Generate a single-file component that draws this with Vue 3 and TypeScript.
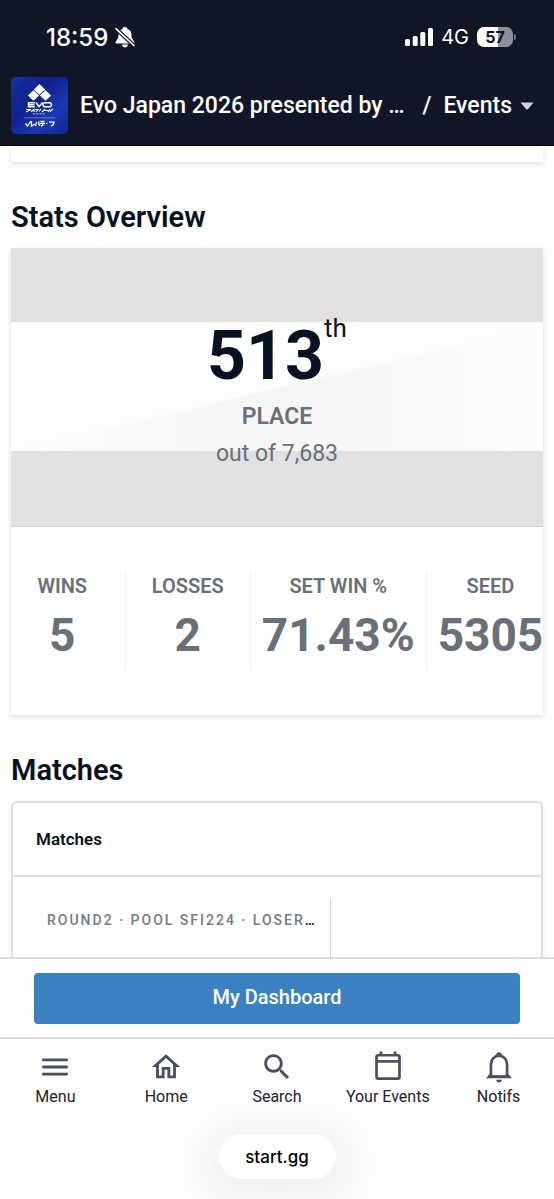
<script setup lang="ts">
interface Stat {
  label: string
  value: string
}

const stats: Stat[] = [
  { label: 'WINS', value: '5' },
  { label: 'LOSSES', value: '2' },
  { label: 'SET WIN %', value: '71.43%' },
  { label: 'SEED', value: '5305' },
]
</script>

<template>
  <div class="screen">
    <header class="top">
      <div class="status">
        <span class="clock">18:59</span>
        <svg class="muted" viewBox="0 0 20 21" aria-hidden="true">
          <path d="M10 0c1.500 0 2.400.9 2.600 2 2.700 1 3.900 3.200 3.900 6 0 3.300 1.100 4.500 2.500 6.200.8 1 .5 2.300-.9 2.300H1.900c-1.400 0-1.700-1.300-.9-2.300C2.400 12.500 3.500 11.300 3.500 8c0-2.800 1.200-5 3.900-6C7.600.9 8.500 0 10 0zM7 17.500h6c-.2 1.800-1.300 2.900-3 2.900s-2.800-1.100-3-2.900z" fill="#fff" />
          <path d="M0 .8l20 18.700" stroke="#111627" stroke-width="4" />
          <path d="M.9 1.600l18.200 17" stroke="#fff" stroke-width="1.500" stroke-linecap="round" />
        </svg>
        <svg class="signal" viewBox="0 0 28 18" fill="#fff" aria-hidden="true">
          <rect x="0" y="11" width="5" height="7" rx="1.500" />
          <rect x="7.700" y="8" width="5" height="10" rx="1.500" />
          <rect x="15.300" y="4" width="5" height="14" rx="1.500" />
          <rect x="23" y="0" width="5" height="18" rx="1.500" />
        </svg>
        <span class="network">4G</span>
        <span class="battery">57</span>
        <span class="battery-cap"></span>
      </div>
      <nav class="crumbs" aria-label="Breadcrumb">
        <svg class="logo" viewBox="0 0 57 57" role="img" aria-label="Evo Japan">
          <defs>
            <linearGradient id="logoFill" x1="0" y1="0" x2="1" y2="1">
              <stop offset="0" stop-color="#18309c" />
              <stop offset=".4" stop-color="#10208c" />
              <stop offset=".7" stop-color="#183ab4" />
              <stop offset="1" stop-color="#13248e" />
            </linearGradient>
          </defs>
          <rect width="57" height="57" rx="5" fill="url(#logoFill)" />
          <path d="M28.500 7l5.700 5.400-5.700 5.400-5.700-5.400zM22.500 13.200l5.600 5.300-5.600 5.300-5.600-5.300zM34.500 13.200l5.600 5.300-5.600 5.300-5.600-5.300z" fill="#fff" />
          <g fill="none" stroke="#fff">
            <path d="M24 25.800h-6.500v3.900H24M17.500 27.800h6M25 25.500l3 4.200 3.500-4.200M34 25.800h4.500q2 0 2 2t-2 2H34q-2 0-2-2t2-2z" stroke-width="1.400" />
            <path d="M15 32.500h5l-5 2.500M20 34.500l3-2v2.500M24 32.500h3l-2 2.500M28 34.500l2-2.500M31 35l3-3M33 33.500h4M37 35l2-3M39 34.500l3-2.500" stroke-width="1.100" />
            <path d="M22 36.900h12" stroke-width="1" stroke-dasharray="2 1.200" opacity=".75" />
            <path d="M13 40.800h31" stroke-width=".7" opacity=".5" />
            <path d="M14.500 46.500l2 2.500 3.500-5M20.500 44v5q2-.5 3-2M25.500 45l-1 4M27.500 44.500l1 4.500M29.500 44.500h4M29 46.500h5M32 46.500q0 2-2 2.500M35.500 46l.5 1M38 45.200h5q0 2.500-3 4" stroke-width="1.300" />
          </g>
        </svg>
        <a class="event" href="#">Evo Japan 2026 presented by …</a>
        <span class="slash">/</span>
        <button class="events" type="button">
          Events
          <svg viewBox="0 0 14 8" aria-hidden="true"><path d="M.5.500h13L7.800 7.200q-.8.800-1.600 0z" fill="#cdd6e8" /></svg>
        </button>
      </nav>
    </header>

    <main class="content">
      <div class="card stub"></div>

      <h2>Stats Overview</h2>
      <section class="card">
        <div class="hero">
          <svg class="backdrop" viewBox="0 0 532 129" preserveAspectRatio="none" aria-hidden="true">
            <defs>
              <linearGradient id="wedge" x1="0" y1="0" x2="1" y2="0">
                <stop offset="0" stop-color="#fdfdfd" />
                <stop offset=".25" stop-color="#fafafa" />
                <stop offset=".5" stop-color="#f6f6f6" />
                <stop offset=".85" stop-color="#fbfbfb" />
                <stop offset="1" stop-color="#fdfdfd" />
              </linearGradient>
            </defs>
            <rect width="532" height="129" fill="#fdfdfd" />
            <path d="M0 129L532 3V129z" fill="url(#wedge)" />
          </svg>
          <p class="rank">513<sup>th</sup></p>
          <p class="place">PLACE</p>
          <p class="total">out of 7,683</p>
        </div>
        <dl class="stats">
          <div v-for="stat in stats" :key="stat.label" class="stat">
            <dt>{{ stat.label }}</dt>
            <dd>{{ stat.value }}</dd>
          </div>
        </dl>
      </section>

      <h2>Matches</h2>
      <section class="matches">
        <h3>Matches</h3>
        <div class="bracket">
          <p class="round"><span>ROUND2 · POOL SFI224 · LOSER</span>…</p>
        </div>
      </section>
    </main>

    <div class="action">
      <button class="dashboard" type="button">My Dashboard</button>
    </div>

    <footer class="bottom">
      <nav class="tabs" aria-label="Main">
        <a href="#">
          <svg viewBox="0 0 24 24" aria-hidden="true"><path d="M3 18h18v-2H3v2zm0-5h18v-2H3v2zm0-7v2h18V6H3z" /></svg>
          Menu
        </a>
        <a href="#">
          <svg viewBox="0 0 24 24" aria-hidden="true"><path d="M12 5.690l5 4.500V18h-2v-6H9v6H7v-7.810l5-4.500M12 3L2 12h3v8h6v-6h2v6h6v-8h3L12 3z" /></svg>
          Home
        </a>
        <a href="#">
          <svg viewBox="0 0 24 24" aria-hidden="true"><path d="M15.500 14h-.79l-.28-.27C15.410 12.590 16 11.110 16 9.500 16 5.910 13.090 3 9.500 3S3 5.910 3 9.500 5.910 16 9.500 16c1.610 0 3.090-.59 4.230-1.570l.27.28v.79l5 4.990L20.490 19l-4.990-5zm-6 0C7.010 14 5 11.990 5 9.500S7.010 5 9.500 5 14 7.010 14 9.500 11.990 14 9.500 14z" /></svg>
          Search
        </a>
        <a href="#">
          <svg viewBox="0 0 24 24" aria-hidden="true">
            <path d="M6 1h2v2.500H6zM16 1h2v2.500h-2z" />
            <rect x="3.900" y="3.700" width="16.200" height="16.500" rx="1.200" fill="none" stroke="#4b505e" stroke-width="1.900" />
            <path d="M4 7.100h16v1.900H4z" />
          </svg>
          Your Events
        </a>
        <a href="#">
          <svg viewBox="0 0 24 24" aria-hidden="true">
            <path d="M10 4.200V3.500a2 2 0 0 1 4 0v.7zM9.800 21h4.400q-.5 2-2.200 2t-2.200-2z" />
            <path d="M5.100 18.900l1.200-1.500V10a5.700 6 0 0 1 11.400 0v7.400l1.200 1.500z" fill="none" stroke="#4b505e" stroke-width="1.900" />
            <path d="M4.700 17.900h14.600L21 20H3z" />
          </svg>
          Notifs
        </a>
      </nav>
      <button class="address" type="button">start.gg</button>
    </footer>
  </div>
</template>

<style>
body {
  margin: 0;
  background: #fefefe;
}
</style>

<style scoped>
.screen {
  display: flex;
  flex-direction: column;
  height: 100vh;
  overflow: hidden;
  font-family: Roboto, "Liberation Sans", sans-serif;
  color: #061121;
  background: #fefefe;
}
h2, h3, p, dl, dd {
  margin: 0;
}
button {
  border: 0;
  font-family: inherit;
  cursor: pointer;
}
a {
  color: inherit;
  text-decoration: none;
}
.top {
  flex: none;
  background: #111627;
  color: #fff;
  border-bottom: 1px solid #060918;
}
.status {
  display: flex;
  align-items: center;
  height: 74px;
  padding: 0 38px 0 46px;
  font-family: Inter, sans-serif;
}
.clock {
  font-size: 24px;
  font-weight: 500;
}
.muted {
  width: 20px;
  height: 21px;
  margin-left: 7px;
}
.signal {
  width: 28px;
  height: 18px;
  margin-left: auto;
}
.network {
  margin: 0 8px;
  font-size: 20px;
}
.battery {
  width: 36px;
  border-radius: 7px;
  background: linear-gradient(90deg, #fff 57%, #8d909b 57%);
  color: #111627;
  font-size: 16px;
  font-weight: 700;
  line-height: 20px;
  text-align: center;
}
.battery-cap {
  width: 2px;
  height: 6px;
  margin-left: 1px;
  border-radius: 0 2px 2px 0;
  background: #70747f;
}
.crumbs {
  display: flex;
  align-items: center;
  height: 63px;
  padding: 0 20px 8px 11px;
  font-size: 23px;
  font-weight: 500;
  white-space: nowrap;
}
.logo {
  flex: none;
  width: 57px;
  height: 57px;
  margin-right: 12px;
}
.slash {
  margin: 0 12px 0 auto;
}
.events {
  display: flex;
  align-items: center;
  gap: 8px;
  padding: 0;
  background: none;
  color: inherit;
  font-size: inherit;
  font-weight: inherit;
}
.events svg {
  width: 14px;
  height: 8px;
}
.content {
  flex: 1;
  min-height: 0;
  overflow: hidden;
  padding: 0 11px;
}
.card {
  overflow: hidden;
  background: #fff;
  box-shadow: 0 2px 5px rgba(0, 0, 0, 0.12);
}
.stub {
  height: 16px;
}
h2 {
  padding: 39px 0 15px;
  font-size: 29px;
  font-weight: 600;
  line-height: 32px;
}
.hero {
  display: grid;
  grid-template-rows: 74px 129px 75px;
  grid-template-columns: 1fr;
  border-bottom: 1px solid #d3d4d6;
  background: #e1e1e1;
  text-align: center;
}
.hero > * {
  grid-column: 1;
}
.backdrop {
  grid-row: 2;
  width: 100%;
  height: 129px;
}
.hero p {
  grid-row: 1 / -1;
}
.hero .rank {
  padding-top: 68px;
  font-size: 68px;
  font-weight: 700;
  line-height: 80px;
}
.rank sup {
  font-size: 26px;
  font-weight: 400;
  line-height: 0;
  vertical-align: 42px;
}
.hero .place {
  padding-top: 155px;
  color: #6b6f77;
  font-size: 23px;
  font-weight: 600;
  line-height: 28px;
}
.hero .total {
  padding-top: 192px;
  color: #6b6f77;
  font-size: 23px;
  line-height: 28px;
}
.stats {
  display: flex;
  justify-content: center;
  padding: 45px 0;
}
.stat {
  box-sizing: border-box;
  flex: none;
  min-width: 125px;
  height: 98px;
  padding: 0 11px;
  color: #6a7079;
  text-align: center;
}
.stat + .stat {
  border-left: 1px solid #f0f0f2;
}
dt {
  padding-top: 2px;
  font-size: 20px;
  font-weight: 600;
  line-height: 24px;
}
dd {
  padding-top: 9px;
  font-size: 46px;
  font-weight: 700;
  line-height: 56px;
}
.matches {
  height: 300px;
  border: 2px solid #dcdee1;
  border-radius: 6px;
  box-shadow: 0 1px 5px rgba(0, 0, 0, 0.06);
}
h3 {
  padding: 23px;
  border-bottom: 2px solid #dcdee1;
  font-size: 17px;
  font-weight: 600;
  line-height: 26px;
}
.bracket {
  display: flex;
  padding: 22px 34px;
}
.round {
  box-sizing: border-box;
  width: 284px;
  height: 200px;
  padding-top: 10px;
  border-right: 1px solid #cfd1d5;
  font-size: 14px;
  font-weight: 500;
  line-height: 22px;
  white-space: nowrap;
}
.round span {
  color: #777b83;
  letter-spacing: 2px;
}
.action {
  flex: none;
  padding: 14px 34px 13px;
  border-top: 2px solid #d9dbdf;
  background: #fefefe;
}
.dashboard {
  display: block;
  width: 100%;
  height: 51px;
  padding: 0 0 3px;
  border-radius: 4px;
  background: #3981c1;
  color: #fff;
  font-size: 20px;
  font-weight: 500;
}
.bottom {
  display: flex;
  flex: none;
  flex-direction: column;
  align-items: center;
  overflow: hidden;
  padding-bottom: 20px;
  border-top: 2px solid #d9dbdf;
  background: #fefefe;
}
.tabs {
  display: grid;
  grid-template-columns: repeat(5, 1fr);
  width: 100%;
  height: 95px;
}
.tabs a {
  display: flex;
  flex-direction: column;
  align-items: center;
  padding-top: 11px;
  color: #1c2130;
  font-size: 16px;
  line-height: 26px;
}
.tabs svg {
  width: 34px;
  height: 34px;
  fill: #4b505e;
}
.address {
  width: 117px;
  height: 45px;
  border-radius: 23px;
  background: #fff;
  box-shadow: 0 8px 40px 16px rgba(0, 0, 0, 0.06);
  color: #000;
  font-family: Inter, sans-serif;
  font-size: 17px;
  font-weight: 500;
}
</style>
